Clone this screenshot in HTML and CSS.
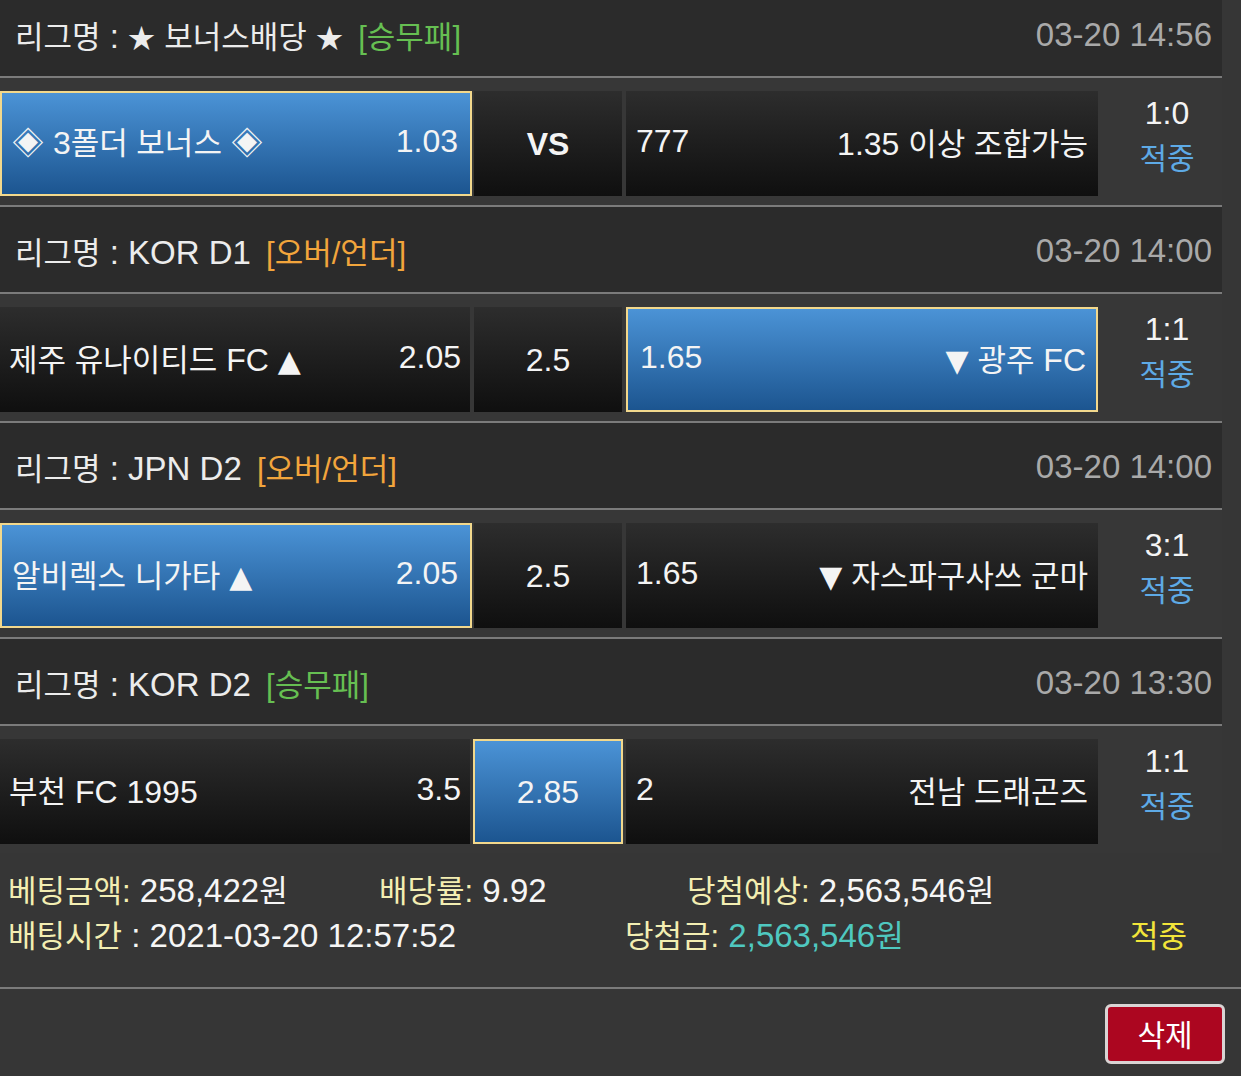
FILE: index.html
```html
<!DOCTYPE html>
<html lang="ko">
<head>
<meta charset="utf-8">
<title>베팅내역</title>
<link rel="stylesheet" href="styles.css">
</head>
<body>
<div class="slip">
  <div class="list">
    <div class="league">
      <div class="league-name"><span class="ko">리그명</span> : <span class="star">★</span> <span class="ko">보너스배당</span> <span class="star">★</span> <span class="tag tag-win ko">[승무패]</span></div>
      <div class="league-date">03-20 14:56</div>
    </div>
    <div class="bet">
      <div class="pick home selected"><span>◈ 3<span class="ko">폴더 보너스</span> ◈</span><span>1.03</span></div>
      <div class="pick mid vs">VS</div>
      <div class="pick away"><span>777</span><span>1.35 <span class="ko">이상 조합가능</span></span></div>
      <div class="result"><div class="score">1:0</div><div class="status ko">적중</div></div>
    </div>

    <div class="league">
      <div class="league-name"><span class="ko">리그명</span> : KOR D1 <span class="tag tag-ou ko">[오버/언더]</span></div>
      <div class="league-date">03-20 14:00</div>
    </div>
    <div class="bet">
      <div class="pick home"><span><span class="ko">제주 유나이티드</span> FC <span class="tri">▲</span></span><span>2.05</span></div>
      <div class="pick mid">2.5</div>
      <div class="pick away selected"><span>1.65</span><span><span class="tri">▼</span> <span class="ko">광주</span> FC</span></div>
      <div class="result"><div class="score">1:1</div><div class="status ko">적중</div></div>
    </div>

    <div class="league">
      <div class="league-name"><span class="ko">리그명</span> : JPN D2 <span class="tag tag-ou ko">[오버/언더]</span></div>
      <div class="league-date">03-20 14:00</div>
    </div>
    <div class="bet">
      <div class="pick home selected"><span><span class="ko">알비렉스 니가타</span> <span class="tri">▲</span></span><span>2.05</span></div>
      <div class="pick mid">2.5</div>
      <div class="pick away"><span>1.65</span><span><span class="tri">▼</span> <span class="ko">자스파구사쓰 군마</span></span></div>
      <div class="result"><div class="score">3:1</div><div class="status ko">적중</div></div>
    </div>

    <div class="league">
      <div class="league-name"><span class="ko">리그명</span> : KOR D2 <span class="tag tag-win ko">[승무패]</span></div>
      <div class="league-date">03-20 13:30</div>
    </div>
    <div class="bet last">
      <div class="pick home"><span><span class="ko">부천</span> FC 1995</span><span>3.5</span></div>
      <div class="pick mid selected">2.85</div>
      <div class="pick away"><span>2</span><span class="ko">전남 드래곤즈</span></div>
      <div class="result"><div class="score">1:1</div><div class="status ko">적중</div></div>
    </div>
  </div>

  <div class="summary">
    <div class="sum-row">
      <span class="sum-item col-a"><span class="lbl ko">베팅금액:</span> 258,422<span class="ko">원</span></span>
      <span class="sum-item col-b"><span class="lbl ko">배당률:</span> 9.92</span>
      <span class="sum-item"><span class="lbl ko">당첨예상:</span> 2,563,546<span class="ko">원</span></span>
    </div>
    <div class="sum-row">
      <span class="sum-item col-c"><span class="lbl ko">배팅시간</span> : 2021-03-20 12:57:52</span>
      <span class="sum-item col-d"><span class="lbl ko">당첨금:</span> <span class="won">2,563,546<span class="ko">원</span></span></span>
      <span class="sum-item hit ko">적중</span>
    </div>
  </div>

  <div class="actions">
    <button class="btn-delete ko" type="button">삭제</button>
  </div>
</div>
</body>
</html>
```

FILE: styles.css
```css
* { box-sizing: border-box; }

html, body {
  margin: 0;
  padding: 0;
  background: #363636;
}

body {
  font-family: "Liberation Sans", "Noto Sans CJK KR", sans-serif;
  color: #f2f2f2;
  font-size: 32px;
  overflow: hidden;
}

.ko {
  font-size: 31px;
}

.star {
  font-family: "Noto Sans CJK KR", sans-serif;
  font-size: 27px;
}

.tri {
  font-family: "DejaVu Sans", sans-serif;
  font-size: 30px;
}

.slip {
  width: 1241px;
  height: 1076px;
  overflow: hidden;
}

.list {
  width: 1222px;
  margin-top: -9px;
}

.league {
  height: 87px;
  background: #2b2b2b;
  border-bottom: 2px solid #7b7b7b;
  display: flex;
  align-items: center;
  justify-content: space-between;
  padding: 2px 10px 0 15px;
  font-size: 33px;
}

.league-name {
  color: #ececec;
  white-space: nowrap;
}

.tag { margin-left: 6px; }
.tag-win { color: #66bf52; }
.tag-ou { color: #f2a53c; }

.league-date {
  color: #a9a9a9;
  white-space: nowrap;
}

.bet {
  height: 129px;
  background: #373737;
  border-bottom: 2px solid #7b7b7b;
  padding: 13px 0 9px 0;
  display: flex;
  gap: 4px;
}

.bet.last {
  height: 127px;
  border-bottom: none;
}

.pick {
  height: 105px;
  background: linear-gradient(#2d2d2d, #0f0f0f);
  display: flex;
  align-items: center;
  justify-content: space-between;
  white-space: nowrap;
  color: #f4f4f4;
  padding-bottom: 4px;
}

.home {
  width: 470px;
  padding-left: 9px;
  padding-right: 9px;
}

.mid {
  width: 148px;
  justify-content: center;
  padding-top: 4px;
  padding-bottom: 2px;
}

.vs { font-weight: bold; }

.away {
  width: 472px;
  padding-left: 10px;
  padding-right: 10px;
}

.pick.selected {
  background: linear-gradient(#4b93d6, #1c5590);
  border: 2px solid #f2d88c;
}

.home.selected { padding-left: 10px; padding-right: 12px; width: 472px; margin-right: -2px; }
.away.selected { padding-left: 12px; padding-right: 10px; }
.mid.selected { width: 150px; margin-left: -1px; margin-right: -1px; }

.result {
  flex: 1;
  padding-left: 10px;
  display: flex;
  flex-direction: column;
  align-items: center;
  justify-content: center;
  line-height: 46px;
  margin-top: -16px;
}

.score { color: #f4f4f4; }
.status.ko { color: #5eaae6; font-size: 30px; }

.summary {
  width: 1241px;
  border-bottom: 2px solid #7b7b7b;
  padding: 13px 0 31px 8px;
  font-size: 33px;
}

.sum-row {
  display: flex;
  height: 45px;
  align-items: center;
  white-space: nowrap;
  color: #f6f6f6;
}

.lbl { color: #f3eeb2; }
.won { color: #4fc8c0; }

.col-a { width: 371px; }
.col-b { width: 308px; }
.col-c { width: 617px; }
.col-d { width: 505px; }
.hit { color: #f2e53a; }

.actions {
  display: flex;
  justify-content: flex-end;
  padding: 15px 16px 0 0;
}

.btn-delete.ko {
  width: 120px;
  height: 60px;
  background: #ac0620;
  border: 3px solid #d9d4d4;
  border-radius: 6px;
  color: #ffffff;
  font-family: "Liberation Sans", "Noto Sans CJK KR", sans-serif;
  font-size: 30px;
  padding: 0 0 2px 0;
}
```
